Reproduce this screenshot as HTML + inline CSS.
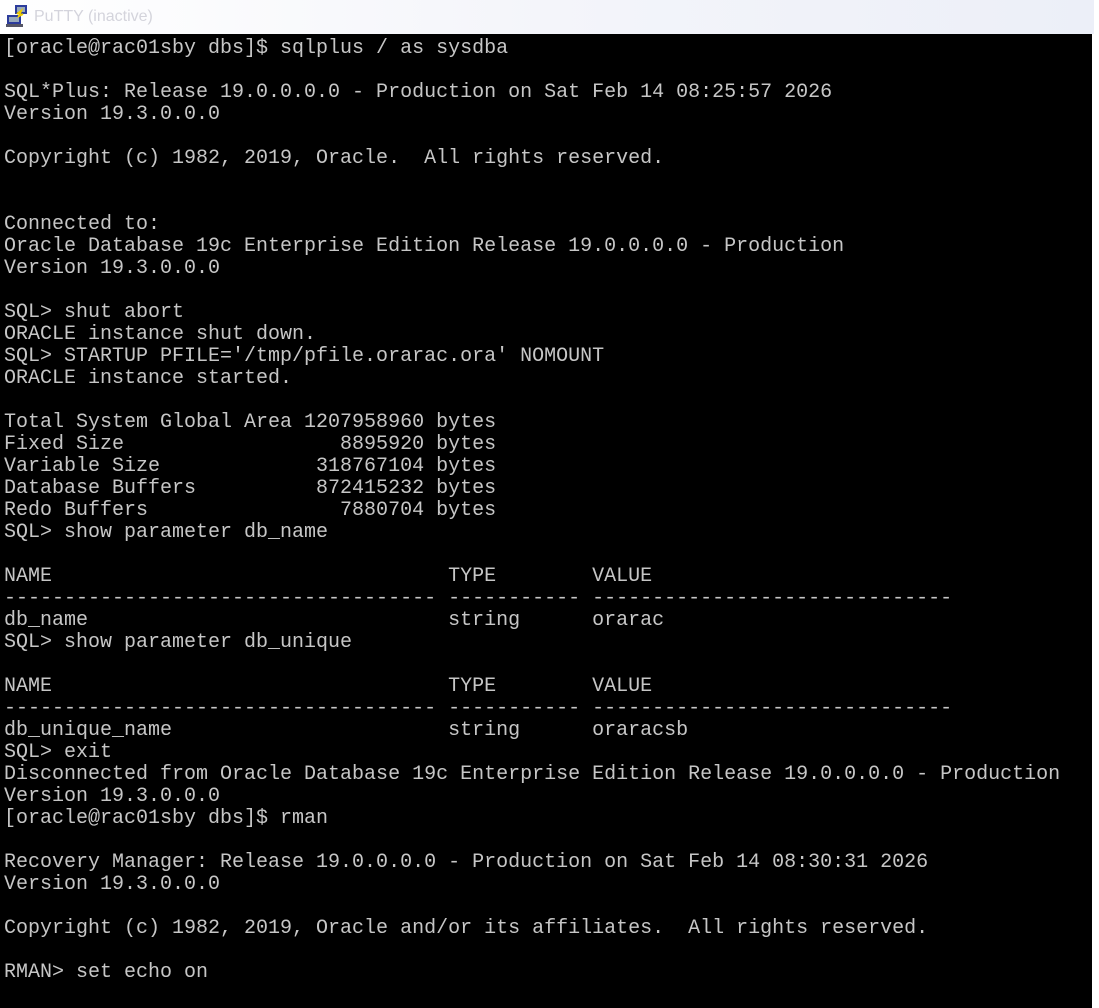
<!DOCTYPE html>
<html><head><meta charset="utf-8"><style>
html,body{margin:0;padding:0;width:1099px;height:1008px;overflow:hidden;background:#fff}
.title{position:absolute;left:0;top:0;width:1094px;height:34px;background:linear-gradient(90deg,#fff 0%,#f4f5fa 50%,#eceff8 100%)}
.title span{position:absolute;left:34px;top:8px;font:16px "Liberation Sans",sans-serif;color:#d4d4dc}
.term{position:absolute;left:0;top:34px;width:1092px;height:974px;background:#000}
pre{margin:0;position:absolute;left:4px;top:4px;font:20px/22px "Liberation Mono",monospace;color:#c6c6c6}
</style></head><body>
<div class="title"><svg width="30" height="30" style="position:absolute;left:4px;top:2px" viewBox="0 0 30 30"><rect x="11" y="3" width="12" height="9" fill="#2c3c9c"/><rect x="13" y="5" width="8" height="5" fill="#9ab"/><rect x="3" y="13" width="14" height="9" fill="#2c3c9c"/><rect x="5" y="15" width="10" height="5" fill="#9ab"/><rect x="2" y="22" width="17" height="3" fill="#556"/><path d="M13 12 L17 9 L15 14 L19 12" stroke="#ec0" stroke-width="2" fill="none"/></svg><span>PuTTY (inactive)</span></div>
<div class="term"><pre>[oracle@rac01sby dbs]$ sqlplus / as sysdba

SQL*Plus: Release 19.0.0.0.0 - Production on Sat Feb 14 08:25:57 2026
Version 19.3.0.0.0

Copyright (c) 1982, 2019, Oracle.  All rights reserved.


Connected to:
Oracle Database 19c Enterprise Edition Release 19.0.0.0.0 - Production
Version 19.3.0.0.0

SQL&gt; shut abort
ORACLE instance shut down.
SQL&gt; STARTUP PFILE='/tmp/pfile.orarac.ora' NOMOUNT
ORACLE instance started.

Total System Global Area 1207958960 bytes
Fixed Size                  8895920 bytes
Variable Size             318767104 bytes
Database Buffers          872415232 bytes
Redo Buffers                7880704 bytes
SQL&gt; show parameter db_name

NAME                                 TYPE        VALUE
------------------------------------ ----------- ------------------------------
db_name                              string      orarac
SQL&gt; show parameter db_unique

NAME                                 TYPE        VALUE
------------------------------------ ----------- ------------------------------
db_unique_name                       string      oraracsb
SQL&gt; exit
Disconnected from Oracle Database 19c Enterprise Edition Release 19.0.0.0.0 - Production
Version 19.3.0.0.0
[oracle@rac01sby dbs]$ rman

Recovery Manager: Release 19.0.0.0.0 - Production on Sat Feb 14 08:30:31 2026
Version 19.3.0.0.0

Copyright (c) 1982, 2019, Oracle and/or its affiliates.  All rights reserved.

RMAN&gt; set echo on</pre></div>
</body></html>
